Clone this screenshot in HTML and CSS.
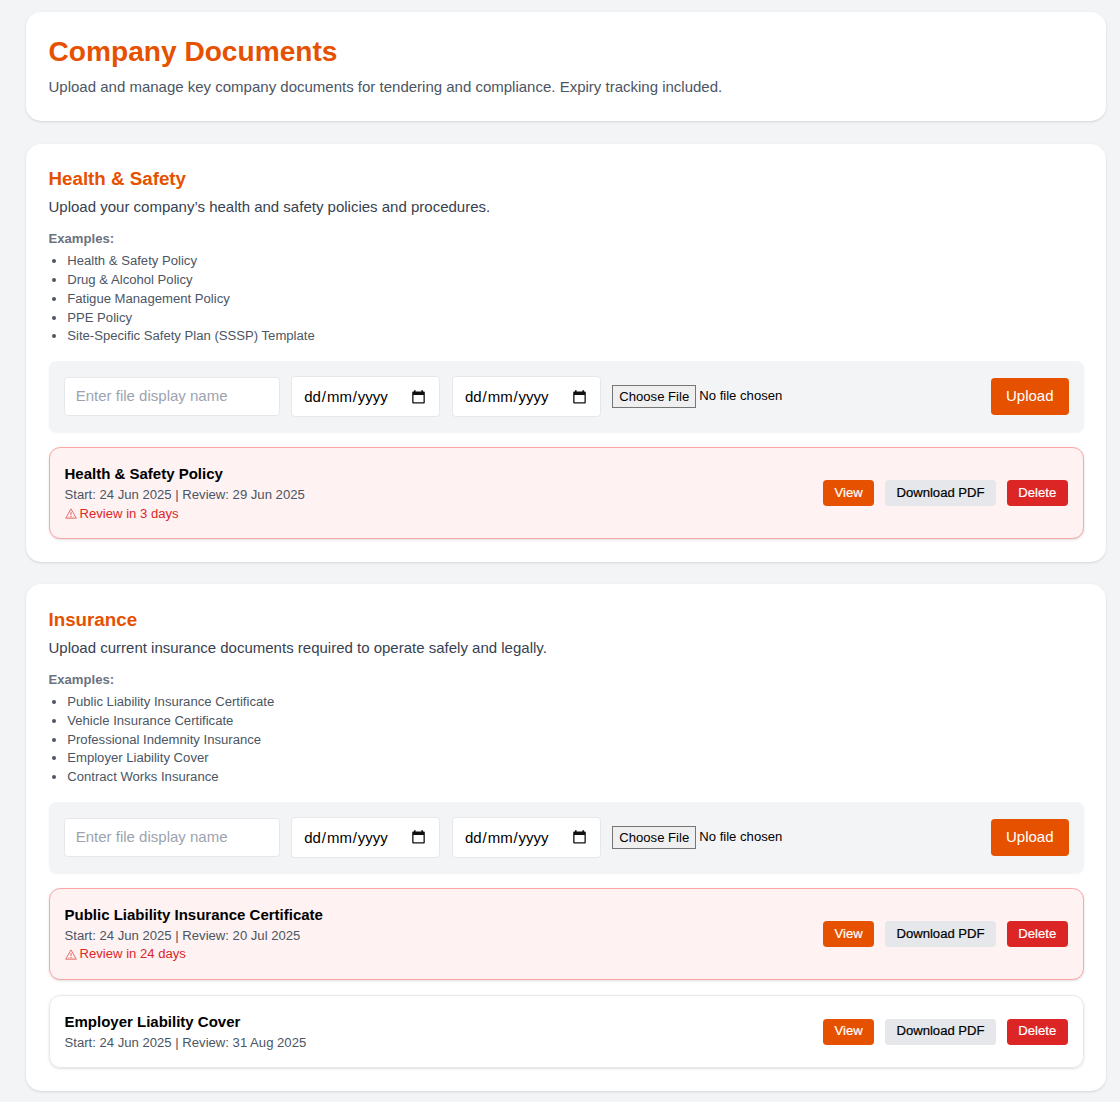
FILE: index.html
```
<!DOCTYPE html>
<html lang="en">
<head>
<meta charset="utf-8">
<title>Company Documents</title>
<link rel="stylesheet" href="styles.css">
</head>
<body>
<svg class="defs" aria-hidden="true">
  <symbol id="calendar" viewBox="0 0 13 14"><path d="M2 0.300h1.600v1.300h5.800V0.300H11v1.300h.9a.9.9 0 0 1 .9.900v10a.9.9 0 0 1-.9.900H1.100a.9.9 0 0 1-.9-.9V2.500a.9.9 0 0 1 .9-.9H2zM1.500 5v7.200h10V5z" fill="#111" fill-rule="evenodd"/></symbol>
  <symbol id="warning" viewBox="0 0 12 11"><path d="M6 .9 11.300 10.200H.7z" fill="none" stroke="#dc2626" stroke-width=".8" stroke-linejoin="round" opacity=".8"/><path d="M6 3.800v3.400M6 8v1" stroke="#dc2626" stroke-width=".9" opacity=".8"/><path d="M2.600 8.900h6.800" stroke="#dc2626" stroke-width=".4" opacity=".5"/></symbol>
</svg>
<main class="page">
  <header class="card">
    <h1>Company Documents</h1>
    <p class="lead">Upload and manage key company documents for tendering and compliance. Expiry tracking included.</p>
  </header>

  <section class="card">
    <h2>Health &amp; Safety</h2>
    <p class="intro">Upload your company’s health and safety policies and procedures.</p>
    <div class="examples">
      <strong>Examples:</strong>
      <ul>
        <li>Health &amp; Safety Policy</li>
        <li>Drug &amp; Alcohol Policy</li>
        <li>Fatigue Management Policy</li>
        <li>PPE Policy</li>
        <li>Site-Specific Safety Plan (SSSP) Template</li>
      </ul>
    </div>
    <form class="upload">
      <input class="name" type="text" placeholder="Enter file display name">
      <div class="date"><span>dd<i>/</i>mm<i>/</i>yyyy</span><svg><use href="#calendar"/></svg></div>
      <div class="date"><span>dd<i>/</i>mm<i>/</i>yyyy</span><svg><use href="#calendar"/></svg></div>
      <div class="file"><button type="button" class="choose">Choose File</button><span>No file chosen</span></div>
      <button type="button" class="submit">Upload</button>
    </form>
    <div class="items">
      <article class="item due">
        <div>
          <h3>Health &amp; Safety Policy</h3>
          <p class="dates">Start: 24 Jun 2025 | Review: 29 Jun 2025</p>
          <p class="alert"><svg><use href="#warning"/></svg>Review in 3 days</p>
        </div>
        <div class="actions"><button class="view">View</button><button class="download">Download PDF</button><button class="delete">Delete</button></div>
      </article>
    </div>
  </section>

  <section class="card">
    <h2>Insurance</h2>
    <p class="intro">Upload current insurance documents required to operate safely and legally.</p>
    <div class="examples">
      <strong>Examples:</strong>
      <ul>
        <li>Public Liability Insurance Certificate</li>
        <li>Vehicle Insurance Certificate</li>
        <li>Professional Indemnity Insurance</li>
        <li>Employer Liability Cover</li>
        <li>Contract Works Insurance</li>
      </ul>
    </div>
    <form class="upload">
      <input class="name" type="text" placeholder="Enter file display name">
      <div class="date"><span>dd<i>/</i>mm<i>/</i>yyyy</span><svg><use href="#calendar"/></svg></div>
      <div class="date"><span>dd<i>/</i>mm<i>/</i>yyyy</span><svg><use href="#calendar"/></svg></div>
      <div class="file"><button type="button" class="choose">Choose File</button><span>No file chosen</span></div>
      <button type="button" class="submit">Upload</button>
    </form>
    <div class="items">
      <article class="item due">
        <div>
          <h3>Public Liability Insurance Certificate</h3>
          <p class="dates">Start: 24 Jun 2025 | Review: 20 Jul 2025</p>
          <p class="alert"><svg><use href="#warning"/></svg>Review in 24 days</p>
        </div>
        <div class="actions"><button class="view">View</button><button class="download">Download PDF</button><button class="delete">Delete</button></div>
      </article>
      <article class="item">
        <div>
          <h3>Employer Liability Cover</h3>
          <p class="dates">Start: 24 Jun 2025 | Review: 31 Aug 2025</p>
        </div>
        <div class="actions"><button class="view">View</button><button class="download">Download PDF</button><button class="delete">Delete</button></div>
      </article>
    </div>
  </section>
</main>
</body>
</html>
```
FILE: styles.css
```
html { font-size: 15px; }
*, *::before, *::after { box-sizing: border-box; }
body {
  margin: 0;
  height: 1102px;
  overflow: hidden;
  background: #f3f4f6;
  color: #000;
  font-family: Arial, "Liberation Sans", sans-serif;
  line-height: 1.5;
}
h1, h2, h3, p, ul { margin: 0; padding: 0; }
button, input { font: inherit; margin: 0; border: 0; }
svg { display: block; flex: none; }
.defs { display: none; }

.page {
  display: flex;
  flex-direction: column;
  gap: 1.5rem;
  padding: 12.25px 14px 12px 26px;
}
.card {
  padding: 1.5rem;
  background: #fff;
  border-radius: 1rem;
  box-shadow: 0 1px 3px rgba(0, 0, 0, .1), 0 1px 2px -1px rgba(0, 0, 0, .1);
}
h1 {
  margin-bottom: .5rem;
  color: #e65100;
  font-size: 1.875rem;
  line-height: 2.25rem;
}
.lead { color: #4b5563; }
h2 {
  margin-bottom: .25rem;
  color: #e65100;
  font-size: 1.25rem;
  line-height: 1.75rem;
}
.intro { margin-bottom: .75rem; color: #374151; }

.examples {
  margin-bottom: 1rem;
  color: #4b5563;
  font-size: .875rem;
  line-height: 1.25rem;
}
.examples strong { display: block; color: #6b7280; }
.examples ul { margin-top: .25rem; padding-left: 1.25rem; }

.upload {
  display: flex;
  align-items: center;
  gap: .75rem;
  height: 4.75rem;
  margin-bottom: 1rem;
  padding: 1rem;
  background: #f3f4f6;
  border-radius: .5rem;
  box-shadow: 0 1px 2px rgba(0, 0, 0, .05);
}
.name, .date {
  background: #fff;
  border: 1px solid #e5e7eb;
  border-radius: .25rem;
}
.name { width: 216px; height: 39.5px; padding: 0 .75rem 2px; }
.name::placeholder { color: #9ca3af; opacity: 1; }
.date {
  display: flex;
  align-items: center;
  justify-content: space-between;
  width: 149.5px;
  height: 41.25px;
  padding: 0 14px 0 12.5px;
}
.date span { padding-top: 2px; }
.date svg { width: 13px; height: 14px; }
.date i { padding: 0 .9px; font-style: normal; }
.file { display: flex; align-items: center; gap: 3px; font-size: .875rem; }
.file span { padding-bottom: 2px; }
.choose {
  width: 84px;
  height: 23px;
  padding: 0;
  background: #efefef;
  border: 1px solid #767676;
  line-height: 19px;
}
.submit {
  height: 2.5rem;
  margin-left: auto;
  padding: 0 1rem;
  background: #e65100;
  color: #fff;
  border-radius: .25rem;
}

.items { display: flex; flex-direction: column; gap: 1rem; }
.item {
  display: flex;
  align-items: center;
  justify-content: space-between;
  padding: 1rem;
  border: 1px solid #e5e7eb;
  border-radius: .75rem;
  box-shadow: 0 1px 3px rgba(0, 0, 0, .1), 0 1px 2px -1px rgba(0, 0, 0, .1);
}
.due { background: #fef2f2; border-color: #fca5a5; }
h3 { font-size: 1rem; line-height: 1.5rem; }
.dates, .alert { font-size: .875rem; line-height: 1.25rem; }
.dates { color: #4b5563; }
.alert { display: flex; align-items: center; gap: 3px; color: #dc2626; }
.alert svg { width: 12px; height: 11px; }

.actions { display: flex; gap: .75rem; font-size: .875rem; line-height: 1.25rem; }
.actions button { padding: .25rem .75rem; border-radius: .25rem; -webkit-text-stroke: .2px currentColor; }
.view { background: #e65100; color: #fff; }
.download { background: #e5e7eb; color: #000; }
.delete { background: #dc2626; color: #fff; }
```
